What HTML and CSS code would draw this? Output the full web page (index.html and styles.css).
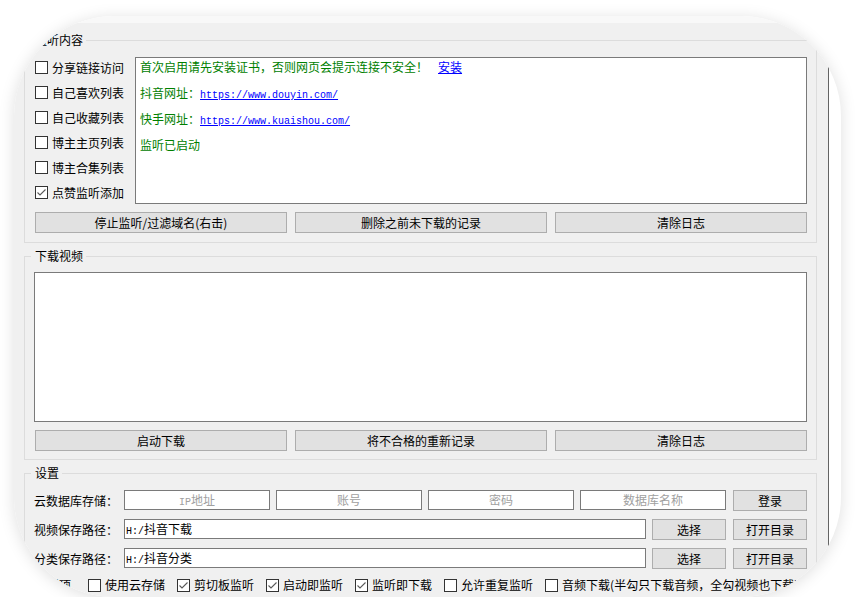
FILE: index.html
```html
<!DOCTYPE html>
<html lang="zh-CN">
<head>
<meta charset="utf-8">
<title>监听下载</title>
<link rel="stylesheet" href="styles.css">
</head>
<body>
<div class="card">
  <div class="topband"></div>
  <div class="body">
    <div class="window">
      <fieldset class="group g1">
        <legend>监听内容</legend>
        <div class="g1-main">
          <div class="checks">
            <label class="cb"><svg class="box" viewBox="0 0 13 13" width="13" height="13"><rect x="0.5" y="0.5" width="12" height="12" fill="#fff" stroke="#333"/></svg><span>分享链接访问</span></label>
            <label class="cb"><svg class="box" viewBox="0 0 13 13" width="13" height="13"><rect x="0.5" y="0.5" width="12" height="12" fill="#fff" stroke="#333"/></svg><span>自己喜欢列表</span></label>
            <label class="cb"><svg class="box" viewBox="0 0 13 13" width="13" height="13"><rect x="0.5" y="0.5" width="12" height="12" fill="#fff" stroke="#333"/></svg><span>自己收藏列表</span></label>
            <label class="cb"><svg class="box" viewBox="0 0 13 13" width="13" height="13"><rect x="0.5" y="0.5" width="12" height="12" fill="#fff" stroke="#333"/></svg><span>博主主页列表</span></label>
            <label class="cb"><svg class="box" viewBox="0 0 13 13" width="13" height="13"><rect x="0.5" y="0.5" width="12" height="12" fill="#fff" stroke="#333"/></svg><span>博主合集列表</span></label>
            <label class="cb"><svg class="box" viewBox="0 0 13 13" width="13" height="13"><rect x="0.5" y="0.5" width="12" height="12" fill="#fff" stroke="#333"/><path d="M2.5 6.5 L5 9 L10.5 3.5" fill="none" stroke="#5a5a5a" stroke-width="1.1"/></svg><span>点赞监听添加</span></label>
          </div>
          <div class="log">
            <p class="ok">首次启用请先安装证书，否则网页会提示连接不安全！<a class="link install">安装</a></p>
            <p class="ok">抖音网址：<a class="link url">https://www.douyin.com/</a></p>
            <p class="ok">快手网址：<a class="link url">https://www.kuaishou.com/</a></p>
            <p class="ok">监听已启动</p>
          </div>
        </div>
        <div class="btnrow">
          <div class="btn">停止监听/过滤域名(右击)</div>
          <div class="btn">删除之前未下载的记录</div>
          <div class="btn">清除日志</div>
        </div>
      </fieldset>

      <fieldset class="group g2">
        <legend>下载视频</legend>
        <div class="dl-list"></div>
        <div class="btnrow">
          <div class="btn">启动下载</div>
          <div class="btn">将不合格的重新记录</div>
          <div class="btn">清除日志</div>
        </div>
      </fieldset>

      <fieldset class="group g3">
        <legend>设置</legend>
        <div class="row">
          <div class="lbl">云数据库存储：</div>
          <div class="tb ph"><span class="mono">IP</span>地址</div>
          <div class="tb ph">账号</div>
          <div class="tb ph">密码</div>
          <div class="tb ph">数据库名称</div>
          <div class="btn sbtn login">登录</div>
        </div>
        <div class="row">
          <div class="lbl">视频保存路径：</div>
          <div class="tb path"><span class="mono">H:/</span>抖音下载</div>
          <div class="btn sbtn pick">选择</div>
          <div class="btn sbtn open">打开目录</div>
        </div>
        <div class="row">
          <div class="lbl">分类保存路径：</div>
          <div class="tb path"><span class="mono">H:/</span>抖音分类</div>
          <div class="btn sbtn pick">选择</div>
          <div class="btn sbtn open">打开目录</div>
        </div>
        <div class="opts">
          <span class="opt-title">设置项</span>
          <label class="cb inline"><svg class="box" viewBox="0 0 13 13" width="13" height="13"><rect x="0.5" y="0.5" width="12" height="12" fill="#fff" stroke="#333"/></svg><span>使用云存储</span></label>
          <label class="cb inline"><svg class="box" viewBox="0 0 13 13" width="13" height="13"><rect x="0.5" y="0.5" width="12" height="12" fill="#fff" stroke="#333"/><path d="M2.5 6.5 L5 9 L10.5 3.5" fill="none" stroke="#5a5a5a" stroke-width="1.1"/></svg><span>剪切板监听</span></label>
          <label class="cb inline"><svg class="box" viewBox="0 0 13 13" width="13" height="13"><rect x="0.5" y="0.5" width="12" height="12" fill="#fff" stroke="#333"/><path d="M2.5 6.5 L5 9 L10.5 3.5" fill="none" stroke="#5a5a5a" stroke-width="1.1"/></svg><span>启动即监听</span></label>
          <label class="cb inline"><svg class="box" viewBox="0 0 13 13" width="13" height="13"><rect x="0.5" y="0.5" width="12" height="12" fill="#fff" stroke="#333"/><path d="M2.5 6.5 L5 9 L10.5 3.5" fill="none" stroke="#5a5a5a" stroke-width="1.1"/></svg><span>监听即下载</span></label>
          <label class="cb inline"><svg class="box" viewBox="0 0 13 13" width="13" height="13"><rect x="0.5" y="0.5" width="12" height="12" fill="#fff" stroke="#333"/></svg><span>允许重复监听</span></label>
          <label class="cb inline"><svg class="box" viewBox="0 0 13 13" width="13" height="13"><rect x="0.5" y="0.5" width="12" height="12" fill="#fff" stroke="#333"/></svg><span>音频下载(半勾只下载音频，全勾视频也下载)</span></label>
        </div>
      </fieldset>
    </div>
  </div>
</div>
</body>
</html>
```

FILE: styles.css
```css
* { box-sizing: border-box; }
html, body { margin: 0; background: #fff; }
body {
  font-family: "Noto Sans CJK SC", "Noto Sans", sans-serif;
  font-size: 12px;
  line-height: 16px;
  color: #000;
}
.card {
  margin: 16px 0 0 14px;
  width: 827px;
  height: 581px;
  border-radius: 100px;
  overflow: hidden;
  background: #fff;
  box-shadow: 0 2px 16px rgba(0, 0, 0, 0.13);
  display: flex;
  flex-direction: column;
}
.topband { height: 7px; flex: none; background: #f8f8f8; }
.body { flex: 1; display: flex; min-height: 0; }
.window {
  width: 815px;
  flex: none;
  background: #f0f0f0;
  border-right: 1px solid #646464;
  padding: 9px 11px 0 10px;
}
.group {
  margin: 0;
  min-width: 0;
  border: 1px solid #dcdcdc;
  padding: 7px 9px 9px 10px;
}
.group legend {
  padding: 0 3px 0 4px;
  margin-left: -4px;
  line-height: 16px;
}
.g2 { margin-top: 5px; padding: 8px 9px 8px 10px; }
.g3 { margin-top: 5px; padding: 9px 9px 9px 10px; }

.g1-main { display: flex; }
.checks { width: 100px; flex: none; }
.cb {
  display: flex;
  align-items: center;
  gap: 4px;
  height: 25px;
  white-space: nowrap;
}
.box { flex: none; display: block; }
.log {
  flex: 1;
  height: 147px;
  margin-top: 2px;
  background: #fff;
  border: 1px solid #7a7a7a;
  padding: 1px 4px;
}
.log p {
  margin: 0 0 10px;
  height: 16px;
  color: #008000;
  line-height: 16px;
  white-space: nowrap;
  overflow: visible;
}
.link { color: #0000ff; text-decoration: underline; }
.install { margin-left: 10px; }
.url, .mono { font-family: "Liberation Mono", monospace; font-size: 10px; line-height: 10px; }

.btnrow { display: flex; gap: 8px; margin-top: 7px; }
.g2 .btnrow { margin-top: 8px; }
.btn {
  flex: 1;
  height: 21px;
  background: #e1e1e1;
  border: 1px solid #adadad;
  display: flex;
  align-items: center;
  justify-content: center;
  white-space: nowrap;
}
.dl-list {
  height: 150px;
  margin-left: -1px;
  background: #fff;
  border: 1px solid #7a7a7a;
}

.row { display: flex; align-items: flex-start; height: 21px; margin-bottom: 8px; }
.lbl { width: 90px; margin-left: -1px; flex: none; line-height: 21px; white-space: nowrap; }
.tb {
  height: 20px;
  background: #fff;
  border: 1px solid #7a7a7a;
  line-height: 18px;
  white-space: nowrap;
  flex: none;
}
.tb.ph { width: 146px; margin-right: 6px; color: #a0a0a0; text-align: center; }
.tb.ph:nth-of-type(5) { margin-right: 0; }
.tb.path { width: 522px; padding-left: 1px; }
.sbtn { flex: none; width: 74px; }
.login { margin-left: 7px; }
.pick { margin-left: 6px; }
.open { margin-left: 7px; }

.opts { display: flex; align-items: center; gap: 12px; height: 16px; white-space: nowrap; }
.opt-title { width: 41px; flex: none; }
.cb.inline { height: 16px; }
```
